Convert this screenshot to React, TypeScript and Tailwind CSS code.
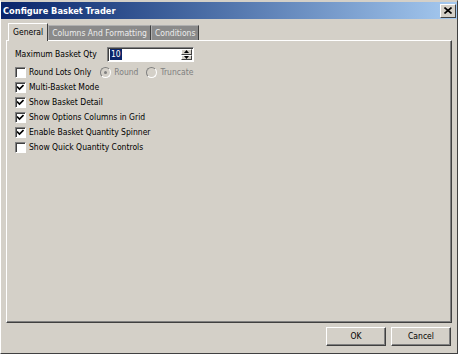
import React from 'react';

const Check: React.FC<{ checked?: boolean }> = ({ checked = false }) => (
  <span className="relative w-[11px] h-[11px] bg-white border border-t-[#808080] border-l-[#808080] border-r-[#fff] border-b-[#fff] shadow-[inset_1px_1px_0_#404040] shrink-0">
    {checked && (
      <svg className="absolute left-[1px] top-[1px]" width="7" height="7" viewBox="0 0 7 7">
        <path d="M0 2.5 L2.5 5 L6.5 1" stroke="#000" strokeWidth="1.6" fill="none" />
      </svg>
    )}
  </span>
);

const Radio: React.FC<{ selected?: boolean }> = ({ selected = false }) => (
  <span className="relative w-[11px] h-[11px] rounded-full bg-[#d4d0c8] border border-t-[#808080] border-l-[#808080] border-r-[#fff] border-b-[#fff] shrink-0 flex items-center justify-center">
    {selected && <span className="w-[3px] h-[3px] rounded-full bg-[#808080]" />}
  </span>
);

const CheckRow: React.FC<{ label: string; checked?: boolean; children?: React.ReactNode }> = ({
  label,
  checked,
  children,
}) => (
  <div className="h-[15px] flex items-center">
    <Check checked={checked} />
    <span className="ml-[3px]">{label}</span>
    {children}
  </div>
);

const Button: React.FC<{ label: string }> = ({ label }) => (
  <button className="w-[60px] h-[19px] bg-[#d4d0c8] border border-t-[#fff] border-l-[#fff] border-r-[#404040] border-b-[#404040] shadow-[inset_-1px_-1px_0_#808080] text-black leading-none">
    {label}
  </button>
);

export default function App() {
  return (
    <div className="w-[458px] h-[354px] bg-[#d4d0c8] flex flex-col border border-t-[#d4d0c8] border-l-[#fff] border-r-[#404040] border-b-[#404040] overflow-hidden text-[8.5px] text-black font-['DejaVu_Sans_Condensed','DejaVu_Sans',sans-serif]">
      {/* title bar */}
      <div className="mt-[1px] h-[17px] flex items-center justify-between pl-[2px] pr-[1px] bg-gradient-to-r from-[#0a246a] to-[#a6caf0]">
        <span className="text-white font-bold text-[9.2px]">Configure Basket Trader</span>
        <span className="w-[16px] h-[14px] bg-[#d4d0c8] border border-t-[#fff] border-l-[#fff] border-r-[#404040] border-b-[#404040] flex items-center justify-center">
          <svg width="8" height="7" viewBox="0 0 8 7">
            <path d="M0.5 0.5 L7.5 6.5 M7.5 0.5 L0.5 6.5" stroke="#000" strokeWidth="1.6" />
          </svg>
        </span>
      </div>

      {/* tabs */}
      <div className="mt-[3px] pl-[7px] flex items-end h-[18px]">
        <div className="h-[18px] px-[4px] flex items-center bg-[#d4d0c8] border-t border-l border-r border-t-[#fff] border-l-[#fff] border-r-[#404040] relative top-[1px] z-10">
          General
        </div>
        <div className="h-[15px] px-[3px] flex items-center bg-[#8a8a8a] text-[#ececec] border-t border-l border-r border-t-[#b0b0b0] border-l-[#b0b0b0] border-r-[#404040]">
          Columns And Formatting
        </div>
        <div className="h-[15px] px-[3px] flex items-center bg-[#8a8a8a] text-[#ececec] border-t border-l border-r border-t-[#b0b0b0] border-l-[#b0b0b0] border-r-[#404040]">
          Conditions
        </div>
      </div>

      {/* panel */}
      <div className="mx-[5px] flex-1 border border-t-[#fff] border-l-[#fff] border-r-[#404040] border-b-[#404040] shadow-[inset_-1px_-1px_0_#808080] pt-[6px] pl-[8px]">
        <div className="h-[15px] flex items-center">
          <span className="w-[92px]">Maximum Basket Qty</span>
          <div className="w-[87px] h-[15px] bg-white border border-t-[#808080] border-l-[#808080] border-r-[#fff] border-b-[#fff] shadow-[inset_1px_1px_0_#404040] flex items-center">
            <span className="ml-[2px] px-[1px] bg-[#0a246a] text-white leading-[11px]">10</span>
            <div className="ml-auto mr-[1px] w-[11px] h-[11px] flex flex-col">
              <div className="flex-1 bg-[#d4d0c8] border border-t-[#fff] border-l-[#fff] border-r-[#404040] border-b-[#404040] flex items-center justify-center">
                <svg width="5" height="3" viewBox="0 0 5 3"><path d="M0 3 L2.5 0 L5 3Z" fill="#000" /></svg>
              </div>
              <div className="flex-1 bg-[#d4d0c8] border border-t-[#fff] border-l-[#fff] border-r-[#404040] border-b-[#404040] flex items-center justify-center">
                <svg width="5" height="3" viewBox="0 0 5 3"><path d="M0 0 L2.5 3 L5 0Z" fill="#000" /></svg>
              </div>
            </div>
          </div>
        </div>
        <div className="mt-[3px] flex flex-col">
          <CheckRow label="Round Lots Only">
            <span className="ml-[9px] flex items-center text-[#808080]">
              <Radio selected />
              <span className="ml-[3px]">Round</span>
              <span className="ml-[8px]"><Radio /></span>
              <span className="ml-[3px]">Truncate</span>
            </span>
          </CheckRow>
          <CheckRow label="Multi-Basket Mode" checked />
          <CheckRow label="Show Basket Detail" checked />
          <CheckRow label="Show Options Columns in Grid" checked />
          <CheckRow label="Enable Basket Quantity Spinner" checked />
          <CheckRow label="Show Quick Quantity Controls" />
        </div>
      </div>

      {/* buttons */}
      <div className="h-[30px] flex items-start justify-end gap-[5px] pt-[4px] pr-[6px]">
        <Button label="OK" />
        <Button label="Cancel" />
      </div>
    </div>
  );
}
